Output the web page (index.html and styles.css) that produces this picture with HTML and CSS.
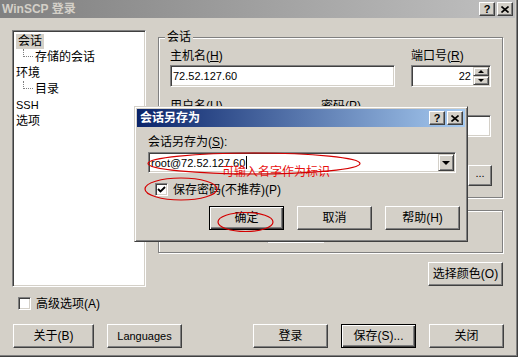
FILE: index.html
```html
<!DOCTYPE html>
<html lang="zh-CN">
<head>
<meta charset="utf-8">
<title>WinSCP 登录</title>
<link rel="stylesheet" href="styles.css">
</head>
<body>
<div class="win">
  <div class="titlebar">
    <span class="title">WinSCP 登录</span>
    <div class="capbtns">
      <span class="capbtn">?</span>
      <span class="capbtn"><svg width="8" height="7" viewBox="0 0 8 7"><path d="M0.5 0.5 L7.5 6.5 M7.5 0.5 L0.5 6.5" stroke="#000" stroke-width="1.6"/></svg></span>
    </div>
  </div>

  <div class="main">
    <div class="leftcol">
      <div class="tree">
        <div class="node"><span class="sel">会话</span></div>
        <div class="node child"><span class="conn"></span>存储的会话</div>
        <div class="node">环境</div>
        <div class="node child"><span class="conn"></span>目录</div>
        <div class="node lat">SSH</div>
        <div class="node">选项</div>
      </div>
      <div class="chk"><span class="box"></span><span>高级选项(A)</span></div>
    </div>

    <div class="rightcol">
      <div class="group g1">
        <span class="legend">会话</span>
        <div class="row row1">
          <div class="field"><div class="lbl">主机名(<u>H</u>)</div><div class="edit">72.52.127.60</div></div>
          <div class="field"><div class="lbl">端口号(<u>R</u>)</div><div class="edit spin"><span class="val">22</span><span class="spinbtns"><span class="sb"><i class="up"></i></span><span class="sb"><i class="down"></i></span></span></div></div>
        </div>
        <div class="row row2">
          <div class="field"><div class="lbl">用户名(<u>U</u>)</div><div class="edit"></div></div>
          <div class="field"><div class="lbl">密码(<u>P</u>)</div><div class="edit"></div></div>
        </div>
        <div class="field">
          <div class="lbl">私钥文件(<u>K</u>)</div>
          <div class="keyrow"><div class="edit"></div><span class="btn dots">...</span></div>
        </div>
      </div>
      <div class="group g2">
        <span class="legend">协议</span>
        <div class="protorow"><span class="plbl">文件协议(F):</span><div class="edit combo small"><span class="val">SFTP</span><span class="ddbtn"><i class="down"></i></span></div></div>
      </div>
      <div class="colorrow"><span class="btn">选择颜色(O)</span></div>
    </div>
  </div>

  <div class="bottom">
    <span class="btn about">关于(B)</span>
    <span class="btn lat">Languages</span>
    <span class="spacer"></span>
    <span class="btn">登录</span>
    <span class="btn def">保存(S)...</span>
    <span class="btn">关闭</span>
  </div>

  <div class="dlg">
    <div class="dtitle">
      <span class="dtext">会话另存为</span>
      <div class="capbtns">
        <span class="capbtn">?</span>
        <span class="capbtn"><svg width="8" height="7" viewBox="0 0 8 7"><path d="M0.5 0.5 L7.5 6.5 M7.5 0.5 L0.5 6.5" stroke="#000" stroke-width="1.6"/></svg></span>
      </div>
    </div>
    <div class="dbody">
      <div class="lbl">会话另存为(<u>S</u>):</div>
      <div class="edit combo"><span class="val">root@72.52.127.60<i class="caret"></i></span><span class="ddbtn"><i class="down"></i></span></div>
      <div class="chk dchk"><span class="box"><svg width="9" height="9" viewBox="0 0 9 9"><path d="M1 4 L3.5 6.5 L8 2" fill="none" stroke="#000" stroke-width="1.8"/></svg></span><span>保存密码(不推荐)(P)</span></div>
      <div class="dbtns"><span class="btn def">确定</span><span class="btn">取消</span><span class="btn">帮助(H)</span></div>
    </div>
  </div>

  <span class="note">可输入名字作为标识</span>
  <svg class="marks" width="518" height="357" viewBox="0 0 518 357">
    <ellipse cx="254" cy="163.5" rx="106" ry="10.5" fill="none" stroke="#d40000" stroke-width="1.2"/>
    <ellipse cx="181" cy="189" rx="36" ry="11" fill="none" stroke="#d40000" stroke-width="1.2"/>
    <ellipse cx="245.5" cy="222" rx="27.5" ry="9.5" fill="none" stroke="#d40000" stroke-width="1.2"/>
  </svg>
</div>
</body>
</html>
```

FILE: styles.css
```css
* { box-sizing: border-box; }
html, body { margin: 0; padding: 0; }
body {
  width: 518px;
  height: 357px;
  overflow: hidden;
  background: #d4d0c8;
  font-family: "Liberation Sans", "Noto Sans CJK SC", sans-serif;
  font-size: 12px;
  line-height: 14px;
  color: #000;
}
u { text-decoration: underline; text-underline-offset: 1px; }

.win {
  position: relative;
  width: 518px;
  height: 357px;
  background: #d4d0c8;
  padding: 0 3px 3px 0;
  box-shadow: inset -1px -1px 0 #404040, inset -2px -2px 0 #808080;
}

/* title bar */
.titlebar {
  height: 18px;
  display: flex;
  align-items: center;
  justify-content: space-between;
  padding: 0 2px 0 2px;
  background: linear-gradient(to right, #808080, #c0c0c0);
}
.title {
  color: #d4d0c8;
  font-weight: bold;
  font-size: 12px;
}
.capbtns { display: flex; gap: 2px; }
.capbtn {
  width: 16px;
  height: 14px;
  display: flex;
  align-items: center;
  justify-content: center;
  background: #d4d0c8;
  border: 1px solid;
  border-color: #fff #404040 #404040 #fff;
  box-shadow: inset -1px -1px 0 #808080;
  font-weight: bold;
  font-size: 11px;
  line-height: 12px;
}

/* main area */
.main {
  display: grid;
  grid-template-columns: 134px 345px;
  column-gap: 12px;
  padding: 12px 0 0 12px;
}
.leftcol { display: flex; flex-direction: column; }
.tree {
  height: 257px;
  background: #fff;
  border: 1px solid;
  border-color: #808080 #fff #fff #808080;
  box-shadow: inset 1px 1px 0 #404040, inset -1px -1px 0 #d4d0c8;
  padding: 2px;
}
.node {
  height: 16px;
  display: flex;
  align-items: center;
  padding-left: 1px;
}
.sel { background: #d4d0c8; padding: 0 2px; line-height: 15px; }
.node.child { padding-left: 8px; }
.conn {
  width: 10px;
  height: 8px;
  margin-top: -8px;
  margin-right: 2px;
  border-left: 1px dotted #808080;
  border-bottom: 1px dotted #808080;
}
.lat { font-size: 11px; }

.chk {
  display: flex;
  align-items: center;
  gap: 5px;
  margin: 10px 0 0 6px;
  height: 13px;
}
.box {
  width: 13px;
  height: 13px;
  flex: none;
  background: #fff;
  border: 1px solid;
  border-color: #808080 #fff #fff #808080;
  box-shadow: inset 1px 1px 0 #404040, inset -1px -1px 0 #d4d0c8;
  display: flex;
  align-items: center;
  justify-content: center;
}

.rightcol { display: flex; flex-direction: column; }
.group {
  position: relative;
  border: 1px solid #808080;
  box-shadow: inset 1px 1px 0 #fff, 1px 1px 0 #fff;
}
.legend {
  position: absolute;
  top: -8px;
  left: 6px;
  padding: 0 2px;
  background: #d4d0c8;
}
.g1 {
  margin-top: 7px;
  height: 161px;
  padding: 11px 10px 0 11px;
}
.row { display: grid; column-gap: 16px; }
.row1 { grid-template-columns: 225px 80px; }
.row2 { grid-template-columns: 135px 170px; margin-top: 12px; }
.g1 > .field { margin-top: 12px; }
.lbl { height: 14px; margin-bottom: 2px; white-space: nowrap; }

.edit {
  height: 22px;
  background: #fff;
  border: 1px solid;
  border-color: #808080 #fff #fff #808080;
  box-shadow: inset 1px 1px 0 #404040, inset -1px -1px 0 #d4d0c8;
  padding: 0 2px;
  display: flex;
  align-items: center;
  font-size: 11px;
}
.spin { padding: 1px 1px 1px 2px; }
.spin .val { flex: 1; text-align: right; padding-right: 2px; }
.spinbtns { display: flex; flex-direction: column; width: 16px; height: 18px; }
.sb {
  flex: 1;
  display: flex;
  align-items: center;
  justify-content: center;
  background: #d4d0c8;
  border: 1px solid;
  border-color: #d4d0c8 #404040 #404040 #d4d0c8;
  box-shadow: inset 1px 1px 0 #fff, inset -1px -1px 0 #808080;
}
i.up, i.down { display: block; width: 0; height: 0; border-left: 3px solid transparent; border-right: 3px solid transparent; }
i.up { border-bottom: 3px solid #000; }
i.down { border-top: 3px solid #000; }

.keyrow { display: flex; gap: 6px; }
.keyrow .edit { flex: 1; height: 21px; }
.btn.dots { width: 24px; height: 21px; font-size: 11px; align-items: flex-start; }

.g2 {
  margin-top: 12px;
  height: 43px;
  padding: 11px 10px 0 11px;
}
.protorow { display: flex; align-items: center; }
.plbl { width: 97px; }
.combo { padding: 1px 1px 1px 2px; }
.combo .val { flex: 1; white-space: nowrap; }
.small { width: 57px; height: 21px; }
.ddbtn {
  width: 16px;
  height: 100%;
  display: flex;
  align-items: center;
  justify-content: center;
  background: #d4d0c8;
  border: 1px solid;
  border-color: #d4d0c8 #404040 #404040 #d4d0c8;
  box-shadow: inset 1px 1px 0 #fff, inset -1px -1px 0 #808080;
}
.ddbtn i.down { border-left-width: 4px; border-right-width: 4px; border-top-width: 4px; }

.colorrow { display: flex; justify-content: flex-end; margin-top: 9px; }

/* buttons */
.btn {
  display: flex;
  align-items: center;
  justify-content: center;
  width: 75px;
  height: 24px;
  flex: none;
  background: #d4d0c8;
  border: 1px solid;
  border-color: #fff #404040 #404040 #fff;
  box-shadow: inset -1px -1px 0 #808080;
  white-space: nowrap;
}
.btn.def {
  border-color: #000;
  box-shadow: inset 1px 1px 0 #fff, inset -1px -1px 0 #404040, inset -2px -2px 0 #808080;
}

.bottom {
  display: flex;
  gap: 13px;
  padding-left: 13px;
  margin-top: 14px;
  width: 504px;
}
.bottom .about { width: 81px; }
.spacer { flex: 1; }

/* save-as dialog (window over the login window) */
.dlg {
  position: absolute;
  left: 134px;
  top: 106px;
  width: 334px;
  height: 136px;
  background: #d4d0c8;
  border: 1px solid;
  border-color: #d4d0c8 #404040 #404040 #d4d0c8;
  box-shadow: inset 1px 1px 0 #fff, inset -1px -1px 0 #808080;
  padding: 2px;
}
.dtitle {
  height: 18px;
  display: flex;
  align-items: center;
  justify-content: space-between;
  padding: 0 2px 0 3px;
  background: linear-gradient(to right, #0a246a, #a6caf0);
}
.dtext { color: #fff; font-weight: bold; font-size: 12px; }
.dbody {
  display: flex;
  flex-direction: column;
  padding: 8px 9px 0 11px;
}
.dbody .lbl { margin-bottom: 3px; }
.dbody .combo { height: 21px; font-size: 11px; }
.caret { display: inline-block; width: 1px; height: 13px; background: #000; vertical-align: -2px; margin-left: 1px; }
.dchk { margin: 10px 0 0 7px; }
.dbtns { display: flex; gap: 13px; margin: 10px 0 0 61px; }

.note {
  position: absolute;
  left: 222px;
  top: 165px;
  color: #e81010;
  white-space: nowrap;
}
.marks {
  position: absolute;
  left: 0;
  top: 0;
  pointer-events: none;
}
```
